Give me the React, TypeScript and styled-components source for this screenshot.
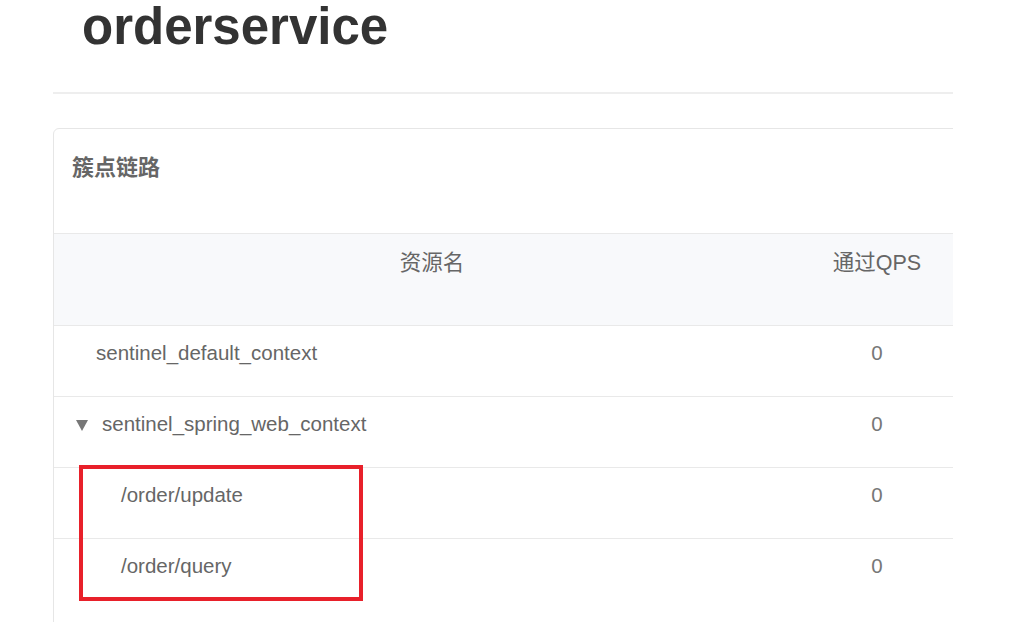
import React from "react";
import styled, { createGlobalStyle } from "styled-components";

const Global = createGlobalStyle`
  html, body { margin: 0; padding: 0; background: #fff; }
  body { font-family: "Liberation Sans", Arial, "Noto Sans CJK SC", sans-serif; }
`;

const Page = styled.div`
  position: relative;
  width: 900px;
  height: 622px;
  overflow: hidden;
  padding-left: 53px;
  background: #fff;
`;

const Title = styled.h1`
  margin: 0 0 0 29px;
  font-size: 51px;
  line-height: 54px;
  font-weight: 700;
  color: #333;
`;

const Divider = styled.div`
  margin-top: 38px;
  height: 2px;
  background: #eeeeee;
`;

const Card = styled.div`
  margin-top: 34px;
  width: 1100px;
  padding-bottom: 40px;
  border: 1px solid #e6e6e6;
  border-radius: 6px;
  background: #fff;
`;

const CardHeader = styled.div`
  box-sizing: border-box;
  height: 105px;
  padding: 22px 0 0 18px;
  border-bottom: 1px solid #e9e9e9;
  font-family: "Noto Sans CJK SC", "Liberation Sans", sans-serif;
  font-size: 22px;
  line-height: 28px;
  font-weight: 700;
  color: #666;
`;

const Table = styled.div`
  display: grid;
  grid-template-columns: 756px 134px 1fr;
`;

const HeadRow = styled.div`
  display: contents;
`;

const HeadCell = styled.div`
  box-sizing: border-box;
  height: 92px;
  padding-top: 17px;
  background: #f8f9fb;
  border-bottom: 1px solid #e9e9e9;
  text-align: center;
  font-family: "Liberation Sans", "Noto Sans CJK SC", sans-serif;
  font-size: 21.5px;
  line-height: 24px;
  color: #666;
`;

const Cell = styled.div<{ $indent?: number; $center?: boolean; $last?: boolean }>`
  box-sizing: border-box;
  height: 71px;
  padding-top: 15px;
  padding-left: ${(p) => p.$indent ?? 0}px;
  border-bottom: ${(p) => (p.$last ? "none" : "1px solid #e9e9e9")};
  display: flex;
  align-items: flex-start;
  justify-content: ${(p) => (p.$center ? "center" : "flex-start")};
  font-size: 20.5px;
  line-height: 24px;
  color: #666;
`;

const Caret = styled.span`
  width: 0;
  height: 0;
  margin-top: 8px;
  margin-right: 14px;
  border-left: 6px solid transparent;
  border-right: 6px solid transparent;
  border-top: 11px solid #777;
`;

const Zero = styled.span`
  color: #777;
`;

const Highlight = styled.div`
  position: absolute;
  left: 79px;
  top: 465px;
  width: 284px;
  height: 136px;
  box-sizing: border-box;
  border: 4px solid #e8202a;
  pointer-events: none;
`;

const rows = [
  { name: "sentinel_default_context", indent: 42, caret: false, qps: "0" },
  { name: "sentinel_spring_web_context", indent: 22, caret: true, qps: "0" },
  { name: "/order/update", indent: 67, caret: false, qps: "0" },
  { name: "/order/query", indent: 67, caret: false, qps: "0" },
];

export default function App() {
  return (
    <>
      <Global />
      <Page>
        <Title>orderservice</Title>
        <Divider />
        <Card>
          <CardHeader>簇点链路</CardHeader>
          <Table>
            <HeadRow>
              <HeadCell>资源名</HeadCell>
              <HeadCell>通过QPS</HeadCell>
              <HeadCell />
            </HeadRow>
            {rows.map((r, i) => (
              <React.Fragment key={r.name}>
                <Cell $indent={r.indent} $last={i === rows.length - 1}>
                  {r.caret && <Caret />}
                  {r.name}
                </Cell>
                <Cell $center $last={i === rows.length - 1}>
                  <Zero>{r.qps}</Zero>
                </Cell>
                <Cell $last={i === rows.length - 1} />
              </React.Fragment>
            ))}
          </Table>
        </Card>
        <Highlight />
      </Page>
    </>
  );
}
